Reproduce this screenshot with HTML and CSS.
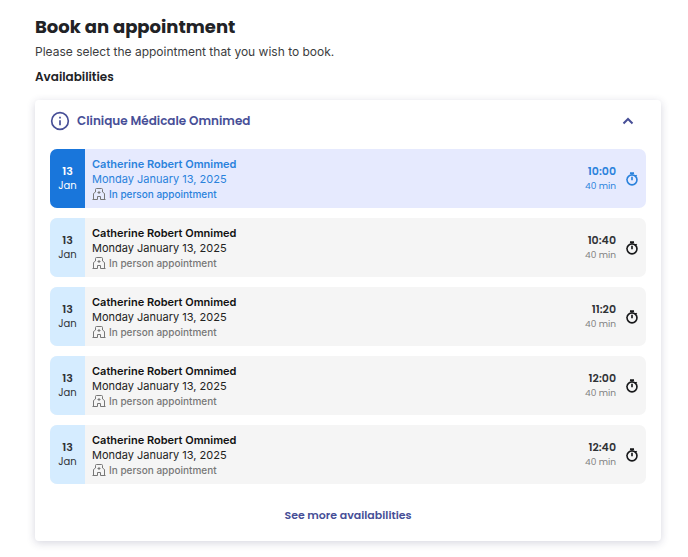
FILE: index.html
```
<!DOCTYPE html>
<html lang="en">
<head>
<meta charset="utf-8">
<meta name="viewport" content="width=device-width, initial-scale=1">
<title>Book an appointment</title>
<link rel="stylesheet" href="styles.css">
</head>
<body>
<svg class="sprite" aria-hidden="true">
  <symbol id="clinic" viewBox="0 0 14 14">
    <g fill="none" stroke="currentColor" stroke-width="1">
      <path d="M1.5 12.5V6.5L3.5 5V2.5Q3.5 1.5 4.5 1.5H9.5Q10.5 1.5 10.5 2.5V5L12.5 6.5V12.5M.5 12.5H5.5V9.5H8.5V12.5H13.5M7 4V7M5.5 5.5H8.5"/>
    </g>
  </symbol>
  <symbol id="timer" viewBox="0 0 24 24">
    <path fill="none" stroke="currentColor" stroke-width="2.8" d="M8.5 2h7M12 8v6M18 7.5l2-2M3.5 13.5a8.500 8.500 0 1 0 17 0a8.500 8.500 0 1 0-17 0"/>
  </symbol>
</svg>
<main class="page">
  <h1 class="title">Book an appointment</h1>
  <p class="intro">Please select the appointment that you wish to book.</p>
  <h2 class="subtitle">Availabilities</h2>
  <section class="card">
    <button class="clinic-header" type="button" aria-expanded="true">
      <svg class="info-icon" viewBox="0 0 24 24" aria-hidden="true"><circle cx="12" cy="12" r="10" fill="none" stroke="currentColor" stroke-width="2"/><path fill="currentColor" d="M11 7h2v2h-2zM11 11h2v6h-2z"/></svg>
      <span class="clinic-name">Clinique Médicale Omnimed</span>
      <svg class="chevron" viewBox="0 0 12 12" aria-hidden="true"><path d="M1.5 8.5L6 4L10.5 8.5" fill="none" stroke="currentColor" stroke-width="2"/></svg>
    </button>
    <ul class="slots">
      <li><button class="slot selected" type="button" aria-pressed="true">
        <span class="date"><span class="day">13</span><span class="month">Jan</span></span>
        <span class="details"><span class="name">Catherine Robert Omnimed</span><span class="full-date">Monday January 13, 2025</span><span class="mode"><svg class="mode-icon" aria-hidden="true"><use href="#clinic"/></svg>In person appointment</span></span>
        <span class="time"><span class="hour">10:00</span><span class="length">40 min</span></span>
        <svg class="timer-icon" aria-hidden="true"><use href="#timer"/></svg>
      </button></li>
      <li><button class="slot" type="button" aria-pressed="false">
        <span class="date"><span class="day">13</span><span class="month">Jan</span></span>
        <span class="details"><span class="name">Catherine Robert Omnimed</span><span class="full-date">Monday January 13, 2025</span><span class="mode"><svg class="mode-icon" aria-hidden="true"><use href="#clinic"/></svg>In person appointment</span></span>
        <span class="time"><span class="hour">10:40</span><span class="length">40 min</span></span>
        <svg class="timer-icon" aria-hidden="true"><use href="#timer"/></svg>
      </button></li>
      <li><button class="slot" type="button" aria-pressed="false">
        <span class="date"><span class="day">13</span><span class="month">Jan</span></span>
        <span class="details"><span class="name">Catherine Robert Omnimed</span><span class="full-date">Monday January 13, 2025</span><span class="mode"><svg class="mode-icon" aria-hidden="true"><use href="#clinic"/></svg>In person appointment</span></span>
        <span class="time"><span class="hour">11:20</span><span class="length">40 min</span></span>
        <svg class="timer-icon" aria-hidden="true"><use href="#timer"/></svg>
      </button></li>
      <li><button class="slot" type="button" aria-pressed="false">
        <span class="date"><span class="day">13</span><span class="month">Jan</span></span>
        <span class="details"><span class="name">Catherine Robert Omnimed</span><span class="full-date">Monday January 13, 2025</span><span class="mode"><svg class="mode-icon" aria-hidden="true"><use href="#clinic"/></svg>In person appointment</span></span>
        <span class="time"><span class="hour">12:00</span><span class="length">40 min</span></span>
        <svg class="timer-icon" aria-hidden="true"><use href="#timer"/></svg>
      </button></li>
      <li><button class="slot" type="button" aria-pressed="false">
        <span class="date"><span class="day">13</span><span class="month">Jan</span></span>
        <span class="details"><span class="name">Catherine Robert Omnimed</span><span class="full-date">Monday January 13, 2025</span><span class="mode"><svg class="mode-icon" aria-hidden="true"><use href="#clinic"/></svg>In person appointment</span></span>
        <span class="time"><span class="hour">12:40</span><span class="length">40 min</span></span>
        <svg class="timer-icon" aria-hidden="true"><use href="#timer"/></svg>
      </button></li>
    </ul>
    <button class="more" type="button">See more availabilities</button>
  </section>
</main>
</body>
</html>
```
FILE: styles.css
```
* { box-sizing: border-box; }
body {
  margin: 0;
  background: #fff;
  color: #212226;
  font-family: Inter, "Liberation Sans", sans-serif;
}
button {
  border: 0;
  padding: 0;
  background: none;
  color: inherit;
  font: inherit;
  text-align: left;
  cursor: pointer;
}
.sprite { display: none; }
.page { padding: 14px 27px 16px 35px; }
.title { margin: 0; font: 700 18px/26px Poppins, Inter, sans-serif; }
.intro { margin: 2px 0 0; color: #3c3d40; font-size: 12px; line-height: 20px; }
.subtitle { margin: 5px 0 0; font: 600 12px/20px Poppins, Inter, sans-serif; }
.card {
  display: flex;
  flex-direction: column;
  margin-top: 13px;
  padding: 8px 15px 16px;
  border-radius: 4px;
  box-shadow: 0 2px 8px rgba(50, 50, 93, .2);
}
.clinic-header {
  display: flex;
  align-items: center;
  gap: 7px;
  height: 26px;
  padding-right: 12px;
  color: #474f97;
}
.info-icon { width: 20px; height: 20px; }
.clinic-name { flex: 1; font: 600 12px/20px Poppins, Inter, sans-serif; }
.chevron { width: 12px; height: 12px; }
.slots {
  display: flex;
  flex-direction: column;
  gap: 10px;
  margin: 15px 0 0;
  padding: 0;
  list-style: none;
}
.slot {
  display: flex;
  align-items: stretch;
  width: 100%;
  min-height: 59px;
  padding-right: 7px;
  overflow: hidden;
  border-radius: 7px;
  background: #f5f5f5;
}
.date {
  display: flex;
  flex-direction: column;
  align-items: center;
  justify-content: center;
  width: 35px;
  background: #d5ecff;
  color: #303236;
}
.day { font: 600 11px/15px Poppins, Inter, sans-serif; }
.month { font: 400 10px/14px Poppins, Inter, sans-serif; }
.details {
  display: flex;
  flex: 1;
  flex-direction: column;
  justify-content: center;
  padding-left: 7px;
}
.name { color: #111; font-size: 11px; font-weight: 600; line-height: 16px; }
.full-date { color: #222; font-size: 11px; line-height: 15px; }
.mode {
  display: flex;
  align-items: center;
  gap: 3px;
  color: #777;
  font-size: 10px;
  font-weight: 500;
  line-height: 15px;
}
.mode-icon { width: 14px; height: 14px; color: #777; }
.time {
  display: flex;
  flex-direction: column;
  align-items: flex-end;
  justify-content: center;
  margin-right: 9px;
}
.hour { color: #303236; font: 600 11px/15px Poppins, Inter, sans-serif; }
.length { color: #808080; font: 400 9px/14px Poppins, Inter, sans-serif; }
.timer-icon { align-self: center; width: 14px; height: 14px; color: #17181a; }
.selected { background: #e6eafe; }
.selected .date { background: #1976db; color: #fff; }
.selected .name,
.selected .full-date,
.selected .mode,
.selected .hour,
.selected .length,
.selected .timer-icon { color: #2a82dc; }
.more {
  align-self: center;
  margin-top: 21px;
  color: #474f97;
  font: 600 11px/20px Poppins, Inter, sans-serif;
}
```
